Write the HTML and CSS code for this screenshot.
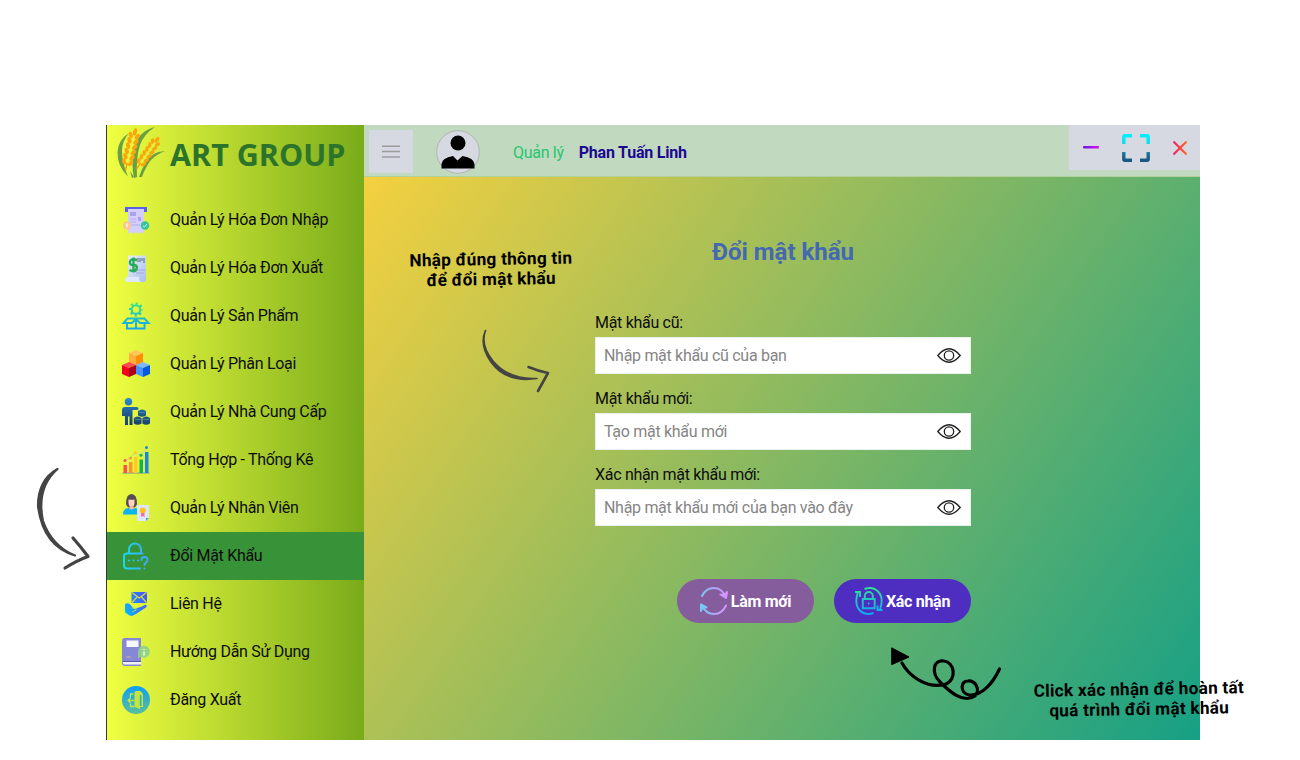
FILE: index.html
```html
<!DOCTYPE html>
<html lang="vi">
<head>
<meta charset="utf-8">
<title>ART GROUP</title>
<link rel="stylesheet" href="styles.css">
</head>
<body>
<svg width="0" height="0" class="defs">
  <defs>
    <linearGradient id="box" gradientUnits="userSpaceOnUse" x1="0" y1="0" x2="0" y2="28"><stop offset="0" stop-color="#2ae68c"/><stop offset="1" stop-color="#10a4fa"/></linearGradient>
    <linearGradient id="lock" gradientUnits="userSpaceOnUse" x1="0" y1="14" x2="28" y2="14"><stop offset="0" stop-color="#12dcec"/><stop offset="1" stop-color="#45a5f5"/></linearGradient>
    <linearGradient id="hand" gradientUnits="userSpaceOnUse" x1="3" y1="20" x2="25" y2="10"><stop offset="0" stop-color="#08b4ff"/><stop offset="1" stop-color="#4a55ff"/></linearGradient>
    <linearGradient id="exit" x1="0" y1="0" x2="0" y2="1"><stop offset="0" stop-color="#0d9ff5"/><stop offset="1" stop-color="#5cbf9c"/></linearGradient>
    <linearGradient id="man" gradientUnits="userSpaceOnUse" x1="0" y1="0" x2="0" y2="28"><stop offset="0" stop-color="#2b8ed0"/><stop offset=".5" stop-color="#1f5f95"/><stop offset="1" stop-color="#1b3f68"/></linearGradient>
    <linearGradient id="paper" x1="0" y1="0" x2="1" y2="1"><stop offset="0" stop-color="#e8f1fd"/><stop offset="1" stop-color="#a9bdec"/></linearGradient>
    <linearGradient id="pinkblue" gradientUnits="userSpaceOnUse" x1="0" y1="0" x2="28" y2="0"><stop offset="0" stop-color="#6fcdf2"/><stop offset="1" stop-color="#e28bff"/></linearGradient>
    <linearGradient id="full" gradientUnits="userSpaceOnUse" x1="0" y1="0" x2="0" y2="28"><stop offset="0" stop-color="#00f2ff"/><stop offset=".35" stop-color="#08dcee"/><stop offset=".7" stop-color="#1c7196"/><stop offset="1" stop-color="#17527f"/></linearGradient>
    <linearGradient id="min" x1="0" x2="1"><stop offset="0" stop-color="#6a14f0"/><stop offset="1" stop-color="#d813e6"/></linearGradient>
    <linearGradient id="close" gradientUnits="userSpaceOnUse" x1="0" y1="0" x2="14" y2="0"><stop offset="0" stop-color="#f21a70"/><stop offset="1" stop-color="#ff6a1c"/></linearGradient>
    <g id="pair"><ellipse cx="-3.400" cy="8" rx="2" ry="3.300" transform="rotate(-28 -3.400 8)"/><ellipse cx="3.400" cy="8" rx="2" ry="3.300" transform="rotate(28 3.400 8)"/></g>
    <g id="grain" fill="#fba60c">
      <ellipse cx="0" cy="4" rx="2" ry="3.800"/>
      <use href="#pair"/><use href="#pair" y="5.500"/><use href="#pair" y="11"/><use href="#pair" y="16.500"/><use href="#pair" y="22"/><use href="#pair" y="27.500"/>
      <path d="M0 36V44" stroke="#f59a0c" stroke-width="1.500"/>
    </g>
    <g id="eye" fill="none" stroke="#222" stroke-width="1.300"><path d="M.8 7.500Q12-6 23.200 7.500Q12 21 .8 7.500Z"/><circle cx="12" cy="7.500" r="4.700"/></g>
  </defs>
</svg>

<div class="window">
  <aside class="sidebar">
    <div class="brand">
      <svg class="brand-logo" viewBox="0 0 50 54">
        <g fill="#6a9f45">
          <path d="M13 8Q2 15 1.500 27Q1 41 12 51.500Q6 38 6 26Q6 16 13 8Z"/>
          <path d="M39 2Q22 6 18 24Q15 40 18 53L21 52Q20 32 24 20Q28 9 39 2Z"/>
          <path d="M49 26Q35 27 30 37Q26 43 23 52L26 52Q30 41 35 35Q41 29 49 26Z"/>
          <path d="M14 46L18 52L16 53Z"/>
        </g>
        <use href="#grain" transform="translate(20 3) rotate(14)"/>
        <use href="#grain" transform="translate(43 12) rotate(35) scale(.88)"/>
      </svg>
      <span class="brand-name">ART GROUP</span>
    </div>
    <nav class="menu">
      <a class="item"><svg viewBox="0 0 28 28"><path d="M3 1h22v5H3z" fill="#5b5fe8"/><path d="M6 3h16v25l-2.500-2-2.700 2-2.800-2-2.700 2-2.600-2L6 28Z" fill="#d4cffa"/><path d="M8 6h6v4H8zM16 11h3v4h-3z" fill="#aaa0f0"/><path d="M8 13h6M8 16h6M8 19h10" stroke="#b3a9f0"/><circle cx="5" cy="19.500" r="4" fill="#ffc58f"/><circle cx="23" cy="19.500" r="4.200" fill="#35c4a0"/><path d="M6 18H4.500v1.500h1V21H4M21 20l1.500 1 2.500-3" stroke="#fff" fill="none" stroke-width=".8"/></svg>Quản Lý Hóa Đơn Nhập</a>
      <a class="item"><svg viewBox="0 0 28 28"><path d="M6 1l2 1 2-1 2 1 2-1 2 1 2-1 2 1 2-1 2 1v24q0 2-2 2H10L6 22Z" fill="url(#paper)"/><path d="M4 23h13v2q0 3 3 3H6q-3 0-3-3Z" fill="#dfe8fb"/><path d="M14 16h9M14 19h8" stroke="#a9a2e6"/><path d="M15 6q-6-2-7 1.500t3.500 3.500 3 4-7 1M11.500 3.500v13.500" fill="none" stroke="#27ab55" stroke-width="2.400"/><path d="M16 4v4M18 4v4M20 4v3M22 4v5" stroke="#526a82"/></svg>Quản Lý Hóa Đơn Xuất</a>
      <a class="item"><svg viewBox="0 0 28 28" fill="none" stroke="url(#box)" stroke-width="1.900"><circle cx="14" cy="7.500" r="4.300"/><circle cx="14" cy="7.500" r="6" stroke-width="2.200" stroke-dasharray="2 2.712" stroke-dashoffset="1"/><path d="M5 21V26.500H22.500V21M14 17V26.500M5.500 16.500H22.500L26.500 21H18L14 17L10 21H1.500Z"/></svg>Quản Lý Sản Phẩm</a>
      <a class="item"><svg viewBox="0 0 28 28"><path d="M7 3l7-3 7 3-7 3z" fill="#ffc65a"/><path d="M7 3l7 3v10l-7-3z" fill="#ffb03c"/><path d="M21 3l-7 3v10l7-3z" fill="#ff8d00"/><path d="M0 15l7-3 7 3-7 3z" fill="#ff4b55"/><path d="M0 15l7 3v9l-7-3z" fill="#f40020"/><path d="M14 15l-7 3v9l7-3z" fill="#a90018"/><path d="M14 15l7-3 7 3-7 3z" fill="#7cb7ff"/><path d="M14 15l7 3v9l-7-3z" fill="#4693ff"/><path d="M28 15l-7 3v9l7-3z" fill="#0059df"/></svg>Quản Lý Phân Loại</a>
      <a class="item"><svg viewBox="0 0 28 28" fill="url(#man)"><circle cx="6.500" cy="3.700" r="3.700"/><path d="M3 9H14.500q2 0 2 1.500T14.500 12H10.500V27H7.500V18.500H6V27H3V18H2V18H0V12Q0 9 3 9Z"/><path d="M16 13Q20 10 24 13V17.500Q20 20 16 17.500ZM11.800 20Q15.700 17 19.600 20V25.500Q15.700 28 11.800 25.500ZM20.400 20Q24.200 17 28 20V25.500Q24.200 28 20.400 25.500Z"/><path d="M17 14q3 1.500 6 0M12.800 21q3 1.500 6 0M21.300 21q3 1.500 6 0" fill="none" stroke="#7dae95" stroke-width=".6"/></svg>Quản Lý Nhà Cung Cấp</a>
      <a class="item"><svg viewBox="0 0 28 28"><path d="M.5 27H27.500" stroke="#7fa3a0" stroke-width="1.200"/><path d="M1.500 19h3.500v8H1.500z" fill="#ff4d58"/><path d="M7 16h3.500v11H7z" fill="#ff9130"/><path d="M12 11h3.500v16H12z" fill="#ffcc1b"/><path d="M17.500 13.500h3.500v13.500h-3.500z" fill="#12b257"/><path d="M23 6h3.500v21H23z" fill="#1687e8"/><path d="M3 14.500L8.500 12L13.500 6.500L19 9L24.500 2" fill="none" stroke="#b5ddad"/><circle cx="3" cy="14.500" r="1.500" fill="#ff4d58"/><circle cx="8.500" cy="12" r="1.500" fill="#ff9130"/><circle cx="13.500" cy="6.500" r="1.500" fill="#ffcc1b"/><circle cx="19" cy="9.300" r="1.500" fill="#12b257"/><circle cx="24.500" cy="1.500" r="1.500" fill="#1687e8"/></svg>Tổng Hợp - Thống Kê</a>
      <a class="item"><svg viewBox="0 0 28 28"><path d="M4 10Q4 0 9.500 0T15 10Q14 14 9.500 14T4 10Z" fill="#554b55"/><path d="M6.500 5.500Q10 6 12.500 5.500V9q0 3.500-3 3.500t-3-3.500Z" fill="#ffd0bd"/><path d="M1 20.500q0-6 5-6.500l3.500 1 4-1q5 .5 5 6.500Z" fill="#08b5ef"/><path d="M7.500 12h4v2l-2 2-2-2Z" fill="#ffb5a3"/><path d="M15 11h12v13l-3 3h-9z" fill="#dce8fa"/><path d="M24 27v-3h3z" fill="#5e94db"/><circle cx="20.700" cy="16.500" r="3" fill="#ffc021"/><path d="M19 19h3.500v4l-1.700-1-1.800 1z" fill="#f66aa7"/></svg>Quản Lý Nhân Viên</a>
      <a class="item active"><svg viewBox="0 0 28 28" fill="none" stroke="url(#lock)" stroke-width="2" stroke-linecap="round"><path d="M7 11V7.500a6 6 0 0 1 12 0V11M20.500 11.500H5Q2 11.500 2 14.500V23Q2 26.500 5.500 26.500H18"/><path d="M7 18.500h.1M11.500 18.500h.1M16 18.500h.1"/><path d="M19.500 18q0-3 3-3t3 3q0 1.500-1.500 2.500T22.500 23M22.500 26.500v.1"/></svg>Đổi Mật Khẩu</a>
      <a class="item"><svg viewBox="0 0 28 28" fill="url(#hand)"><path d="M9.500 2H25V13H9.500Z"/><path d="M10 2.500L17.300 8L24.500 2.500M10 12.500L15 7M24.500 12.500L19.500 7" fill="none" stroke="#c9df3b" stroke-width="1.200"/><path d="M3 14Q7 12 9.500 16L12 19L20 16.500Q26 13.500 24.500 17L14 24L10 26Q7 26 3 22Z"/><path d="M9.500 18Q15 17 14 20L10 22" fill="none" stroke="#c9df3b" stroke-width=".8"/></svg>Liên Hệ</a>
      <a class="item"><svg viewBox="0 0 28 28"><path d="M3 0H19V28H3Q0 28 0 25V3Q0 0 3 0Z" fill="#8688d6"/><path d="M1 23H19V26.500H3Q1 26.500 1 25Z" fill="#f1f0ff"/><path d="M1 23.500H19" stroke="#5558aa"/><path d="M4.500 2.500H16.500V9H4.500Z" fill="#f7f7ff"/><path d="M4.500 19h4" stroke="#e8ba75"/><path d="M16 14a6 6 0 1 1 3 5l-3 1Z" fill="#91d18c" opacity=".92"/><path d="M22 11v1M22 13.500v4" stroke="#eaf9df" stroke-width="1.600"/></svg>Hướng Dẫn Sử Dụng</a>
      <a class="item"><svg viewBox="0 0 28 28"><circle cx="14" cy="14" r="14" fill="url(#exit)"/><path d="M12.500 7.500V6.500Q12.500 5 14 5H18Q21 6.500 21 9V21H18V23L12.500 21Z" fill="#c5e63f"/><path d="M11.500 8H8.500V11.500M8.500 17.500V20.500H12M12.500 14.500H6M8.500 12L6 14.500L8.500 17" fill="none" stroke="#c5e63f" stroke-width="1.300"/><path d="M17.800 8.500L19.500 9.500V20H17.800Z" fill="#36afbe"/></svg>Đăng Xuất</a>
    </nav>
  </aside>

  <section class="content">
    <header class="topbar">
      <button class="burger"><svg width="18" height="13" viewBox="0 0 18 13" stroke="#9b9c9e" stroke-width="1.500"><path d="M0 1.200h18M0 6.600h18M0 12h18"/></svg></button>
      <svg class="avatar" viewBox="0 0 44 44"><circle cx="22" cy="22" r="21.300" fill="#d6d9e1" stroke="#a0a6a5" stroke-width=".7"/><circle cx="22" cy="13" r="7.500"/><path d="M5.500 38.500V34Q6 28 17 26L21.500 30.500L26.500 26Q38 28 38.500 34V38.500Z"/></svg>
      <span class="role">Quản lý</span>
      <strong class="user">Phan Tuấn Linh</strong>
      <div class="controls">
        <svg width="16" height="3" viewBox="0 0 16 3"><rect width="16" height="2.600" rx="1" fill="url(#min)"/></svg>
        <svg class="expand" width="28" height="28" viewBox="0 0 28 28" fill="none" stroke="url(#full)" stroke-width="3.400"><path d="M1.800 10V3Q1.800 1.800 3 1.800H10M18 1.800H25Q26.200 1.800 26.200 3V10M26.200 18V25Q26.200 26.200 25 26.200H18M10 26.200H3Q1.800 26.200 1.800 25V18"/></svg>
        <svg width="14" height="14" viewBox="0 0 14 14" fill="none" stroke="url(#close)" stroke-width="2.200" stroke-linecap="round"><path d="M1.200 1.200L12.800 12.800M12.800 1.200L1.200 12.800"/></svg>
      </div>
    </header>
    <main class="page">
      <form class="form">
        <h1>Đổi mật khẩu</h1>
        <label>Mật khẩu cũ:</label>
        <div class="field"><span>Nhập mật khẩu cũ của bạn</span><svg width="24" height="15" viewBox="0 0 24 15"><use href="#eye"/></svg></div>
        <label>Mật khẩu mới:</label>
        <div class="field"><span>Tạo mật khẩu mới</span><svg width="24" height="15" viewBox="0 0 24 15"><use href="#eye"/></svg></div>
        <label>Xác nhận mật khẩu mới:</label>
        <div class="field"><span>Nhập mật khẩu mới của bạn vào đây</span><svg width="24" height="15" viewBox="0 0 24 15"><use href="#eye"/></svg></div>
        <div class="actions">
          <button type="button" class="btn reset"><svg width="28" height="28" viewBox="0 0 28 28" fill="none" stroke="url(#pinkblue)" stroke-width="2" stroke-linecap="round" stroke-linejoin="round"><path d="M2 9Q6 1 14 1T25.500 10M26 18.500Q22 27 14 27T2.500 19"/><path d="M20.500 7.500L26 11L27 5M1 24V17.500L6.500 20.500" fill="url(#pinkblue)"/></svg>Làm mới</button>
          <button type="button" class="btn submit"><svg width="28" height="28" viewBox="0 0 28 28" fill="none" stroke="url(#box)" stroke-width="1.900"><path d="M9.500 2Q18-1 23.500 5T25 22.500M27.500 23H22.500V18.500M18.500 26Q10 29 4.500 23T3 5M0 5H5V10"/><path d="M7.800 12H19.700V21.300H7.800ZM9.800 12V9a4 4 0 0 1 8 0V12M13 16.500h1.500"/></svg>Xác nhận</button>
        </div>
      </form>
    </main>
  </section>
</div>

<!-- Hand-drawn hints laid over the window -->
<p class="hint hint-form">Nhập đúng thông tin<br>để đổi mật khẩu</p>
<p class="hint hint-submit">Click xác nhận để hoàn tất<br>quá trình đổi mật khẩu</p>
<svg class="arrow arrow-menu" width="62" height="112" viewBox="0 0 62 112"><path d="M27.500 8Q8 19 8 45Q13 85 45 94.500Q22 85 13 60Q6 27 27.500 8Z" stroke-width="2.200" fill="#444"/><path d="M43 77Q51 86 58 95.500Q48 99 35 107" stroke-width="3.200"/></svg>
<svg class="arrow arrow-form" width="76" height="70" viewBox="0 0 76 70"><path d="M10.500 5.500Q4 20 16 37Q31 58 62 53.500Q34 55 18 36Q5 20 10.500 5.500Z" stroke-width="1.700" fill="#444"/><path d="M53.500 42Q63 46 73 48Q68 57 63 66" stroke-width="2.600"/></svg>
<svg class="arrow arrow-submit" width="120" height="62" viewBox="0 0 120 62"><path d="M13 16C20 29 38 42 56 37.500C69 32 65 15 55 14C44 12 42 26 51 35C60 44 74 57 86 49C92 42 86 33.500 79 34C71 34 71 46 80 48C93 49 104 36 110.500 22" stroke-width="3.200"/><path d="M3 1L20 10L3 17.500Z" stroke-width="1" fill="#000"/></svg>
</body>
</html>
```

FILE: styles.css
```css
* { box-sizing: border-box; }

body {
  margin: 0;
  width: 1300px;
  height: 760px;
  padding: 125px 100px 20px 106px;
  position: relative;
  overflow: hidden;
  background: #fff;
  color: #0d0d0d;
  font-family: Roboto, "Noto Sans", sans-serif;
  font-size: 16px;
  letter-spacing: -.3px;
}

.defs { position: absolute; }

.window {
  display: flex;
  height: 615px;
}

.sidebar {
  width: 258px;
  border-left: 1px solid #33383a;
  background: linear-gradient(to right, #f0ff42, #79ab1a);
}

.brand {
  display: flex;
  align-items: flex-start;
  height: 70px;
  padding-left: 9px;
}

.brand-logo { width: 50px; height: 54px; }

.brand-name {
  margin-left: 4px;
  padding-top: 7px;
  color: #2c742c;
  font: bold 30.5px/44px "Open Sans", "Noto Sans", sans-serif;
  letter-spacing: 0;
  white-space: nowrap;
}

.item {
  display: flex;
  align-items: center;
  gap: 20px;
  height: 48px;
  padding-left: 15px;
  white-space: nowrap;
}

.menu { padding-top: .5px; }
.item svg { width: 28px; height: 28px; flex: none; overflow: visible; }
.item.active { background: #389237; }

.content {
  flex: 1;
  display: flex;
  flex-direction: column;
}

.topbar {
  display: flex;
  align-items: flex-start;
  height: 52px;
  background: #c1d9bf;
  border-bottom: 1px solid #b2d09b;
}

.burger {
  display: flex;
  align-items: center;
  justify-content: center;
  width: 44px;
  height: 43px;
  margin: 5px 0 0 5px;
  padding: 0;
  border: 0;
  background: #d6d9e1;
}

.avatar { width: 44px; height: 44px; margin: 5px 0 0 23px; }
.role { margin: 18px 0 0 33px; color: #24c771; line-height: 20px; }
.user { margin: 18px 0 0 15px; color: #1c0892; line-height: 20px; letter-spacing: -.2px; }

.controls {
  display: flex;
  align-items: center;
  width: 131px;
  height: 45px;
  margin-left: auto;
  padding-left: 14px;
  background: #d6d9e1;
}

.expand { margin: 0 23px; }

.page {
  flex: 1;
  background: linear-gradient(124deg, #f4d03f, #16a085);
}

.form {
  width: 376px;
  margin-left: 231px;
}

.form h1 {
  margin: 0 0 40px;
  padding-top: 59px;
  color: #4468b1;
  font-size: 24px;
  font-weight: 700;
  line-height: 32px;
  letter-spacing: 0;
  text-align: center;
}

.form label {
  display: block;
  height: 29px;
  line-height: 30px;
}

.field {
  display: flex;
  align-items: center;
  justify-content: space-between;
  height: 37px;
  margin-bottom: 10px;
  padding: 0 9px 0 8px;
  border: 1px solid #e8f2ec;
  background: #fff;
  color: #858585;
}

.actions {
  display: flex;
  justify-content: flex-end;
  gap: 20px;
  margin-top: 53px;
}

.btn {
  display: flex;
  align-items: center;
  justify-content: center;
  gap: 3px;
  width: 137px;
  height: 44px;
  padding: 0;
  border: 0;
  border-radius: 22px;
  color: #fff;
  font: bold 16px Roboto, sans-serif;
  letter-spacing: -.3px;
  white-space: nowrap;
}

.reset { background: #855c9c; }
.submit { background: #4e2dc1; }

.hint {
  position: absolute;
  margin: 0;
  color: #000;
  font-weight: 700;
  font-size: 17.2px;
  line-height: 20px;
  letter-spacing: .25px;
  text-align: center;
  white-space: nowrap;
  transform: rotate(-1deg);
}

.hint-form { left: 391px; top: 249px; width: 200px; }
.hint-submit { left: 1019px; top: 679px; width: 240px; }

.arrow {
  position: absolute;
  fill: none;
  stroke: #444;
  stroke-linecap: round;
  stroke-linejoin: round;
}

.arrow-menu { left: 30px; top: 461px; }
.arrow-form { left: 475px; top: 325px; }
.arrow-submit { left: 889px; top: 647px; stroke: #000; }
```
